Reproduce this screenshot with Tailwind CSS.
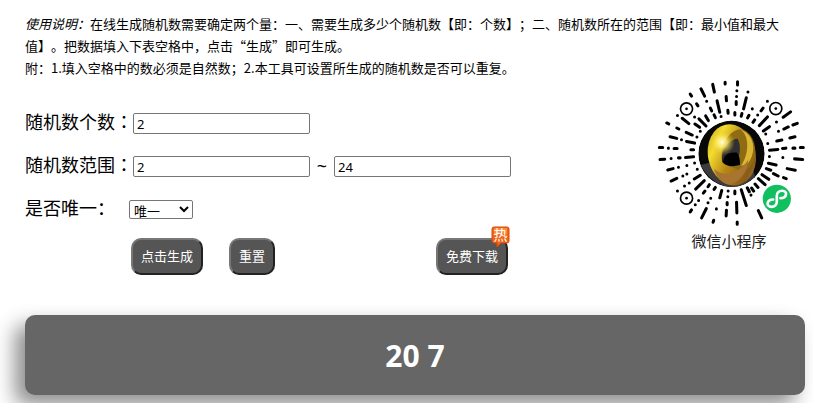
<!DOCTYPE html>
<html lang="zh-CN">
<head>
  <meta charset="UTF-8" />
  <meta name="viewport" content="width=device-width, initial-scale=1.0"/>
  <title>在线随机数生成器</title>
  <script src="https://cdn.jsdelivr.net/npm/@tailwindcss/browser@4"></script>
  <style>
    body {
      font-family: 'Noto Sans', 'Noto Sans CJK SC', sans-serif;
      text-spacing-trim: space-all;
    }
  </style>
</head>
<body class="bg-white text-black">

  <main class="pt-[13px] pl-[25px] pr-2 pb-2">
    <!-- Instructions -->
    <section class="pr-5 text-[13px] leading-[22px] font-['Noto_Sans_CJK_SC',sans-serif]">
      <p><em>使用说明：</em>在线生成随机数需要确定两个量：一、需要生成多少个随机数【即：个数】；二、随机数所在的范围【即：最小值和最大值】。把数据填入下表空格中，点击“生成”即可生成。</p>
      <p>附：1.填入空格中的数必须是自然数；2.本工具可设置所生成的随机数是否可以重复。</p>
    </section>

    <div class="flex justify-between">
      <form id="random-form" class="pt-[23px] text-[18px]">
        <div class="flex items-center h-[43px]">
          <label for="count" class="w-[108px] pb-[3px] leading-6 whitespace-nowrap">随机数个数<span lang="zh-TW">：</span></label>
          <input id="count" type="text" value="2" class="w-[177px] h-[21px] px-[3px] border border-[#767676] rounded-xs text-[13px]">
        </div>
        <div class="flex items-center h-[43px]">
          <label for="min" class="w-[108px] pb-[3px] leading-6 whitespace-nowrap">随机数范围<span lang="zh-TW">：</span></label>
          <input id="min" type="text" value="2" class="w-[177px] h-[21px] px-[3px] border border-[#767676] rounded-xs text-[13px]">
          <span class="w-6 text-center">~</span>
          <input id="max" type="text" value="24" aria-label="最大值" class="w-[177px] h-[21px] px-[3px] border border-[#767676] rounded-xs text-[13px]">
        </div>
        <div class="flex items-center h-[43px]">
          <label for="unique" class="w-[104px] pb-[3px] leading-6 whitespace-nowrap">是否唯一：</label>
          <select id="unique" class="w-16 h-[19px] border border-[#767676] rounded-xs bg-white text-[13px] leading-4">
            <option value="1">唯一</option>
            <option value="0">不唯一</option>
          </select>
        </div>
        <div class="flex mt-[7px] pl-[106px] text-[13px] text-white">
          <button type="button" id="generate" class="h-[37px] px-2 rounded-[10px] border-2 border-t-[#777] border-l-[#777] border-r-[#222] border-b-[#222] bg-[#555]">点击生成</button>
          <button type="reset" class="h-[37px] px-2 ml-[26px] rounded-[10px] border-2 border-t-[#777] border-l-[#777] border-r-[#222] border-b-[#222] bg-[#555]">重置</button>
          <button type="button" class="relative h-[37px] px-2 ml-[161px] rounded-[10px] border-2 border-t-[#777] border-l-[#777] border-r-[#222] border-b-[#222] bg-[#555]">
            免费下载
            <span class="absolute -top-[14px] -right-1 w-[19px] h-[22px]">
              <svg class="absolute inset-0" width="19" height="22" viewBox="0 0 19 22">
                <path d="M3 1h13a2 2 0 0 1 2 2v12a2 2 0 0 1-2 2h-6l-4 4v-4H3a2 2 0 0 1-2-2V3a2 2 0 0 1 2-2z" fill="#f06414" stroke="#d9480f"/>
                <path d="M3 2h13v6H3z" fill="#fa8c3c"/>
              </svg>
              <span class="relative block text-center text-[14px] leading-[17px]">热</span>
            </span>
          </button>
        </div>
      </form>

      <!-- Mini program code -->
      <figure class="shrink-0 w-[148px]">
        <svg width="148" height="148" viewBox="20 14 441 441" role="img" aria-label="微信小程序码">
          <defs>
            <linearGradient id="gold" x1="0" y1="0" x2="1" y2="1">
              <stop offset="0" stop-color="#b89410"/>
              <stop offset=".25" stop-color="#f4dc30"/>
              <stop offset=".5" stop-color="#b98a14"/>
              <stop offset=".8" stop-color="#8a5a18"/>
              <stop offset="1" stop-color="#c08a3c"/>
            </linearGradient>
            <radialGradient id="shine">
              <stop offset="0" stop-color="#fffde0"/>
              <stop offset=".4" stop-color="#ffef70" stop-opacity=".8"/>
              <stop offset="1" stop-color="#e0c020" stop-opacity="0"/>
            </radialGradient>
            <clipPath id="disc"><circle cx="242" cy="237" r="99"/></clipPath>
          </defs>

          <g fill="none" stroke="#000" stroke-width="9" stroke-linecap="round">
            <path transform="translate(15 9)" d="M208 15v5M211 57l1 13M216 98l1 9M171 21l5 23M136 34l11 22M104 50l4 6M184 70l8 34M164 92l4 8M123 79l4 6M153 71h0M150 115l8 14M175 112l4 8M196 117h0M117 118h0M66 114h0M80 122l20 16M130 124l21 21M34 136l6 3M64 151l6 3M92 164l18 8M118 139l14 10M134 161h0M124 178h0M44 177l20 5M78 186h0M93 191l24 5M12 209h10M39 211h0M56 212h9M106 216h8"/>
            <path transform="translate(15 234)" d="M14 20l14-1M47 17h0M69 15h5M90 14l24-2M37 51l16-4M69 43h0M94 38h0M117 30h0M125 49h0M47 84l17-8M82 69h0M94 63h0M116 78l18-11M66 114h0M87 99h0M101 90h0M120 108l26-25M119 155h0M129 142h0M143 120l5-6M157 101l4-6M157 149h0M165 135h0M175 109l4-6M104 176l4-6M138 194l14-28M172 207l2-6M182 167h0M192 134l6-22M217 114h0M216 131h0M214 148v7M212 171l-1 17"/>
            <path transform="translate(243 9)" d="M17 13v10M15 40h0M14 57h0M13 72v9M9 105v7M48 44h0M43 61l-8 33M61 94h0M30 108l-2 8M51 113l-4 8M68 127l-5 7M106 71h0M93 92l-6 8M77 112h0M106 118l-24 26M175 103l-22 16M133 133h0M112 147l-18 13M195 137l-13 5M168 148l-13 6M139 161h0M101 169h0M188 177l-15 4M149 187l-15 3M107 197h0M112 217l25-2M151 212l10-1M182 211h6M204 209h9M112 236h0M152 239h0M187 243l24 2M109 256l23 5M165 272l24 5M103 272l13 5M124 287l14 7M154 299l8 3M90 290l20 14M79 302l20 18M69 318l9 10M59 330l6 9M46 329l6 12M57 351h0M28 335l15 47M9 339v8M14 372l1 32M16 431v7M79 397l10 22"/>
          </g>
          <g fill="#fff" stroke="#000" stroke-width="5">
            <circle cx="108" cy="103" r="18"/>
            <circle cx="374" cy="102" r="18"/>
            <circle cx="108" cy="369" r="18"/>
          </g>
          <circle cx="108" cy="103" r="4"/>
          <circle cx="374" cy="102" r="4"/>
          <circle cx="108" cy="369" r="4"/>

          <!-- Gold ring logo -->
          <g clip-path="url(#disc)">
            <circle cx="242" cy="237" r="99" fill="#080808"/>
            <path d="M150 270q30 58 92 68q50-4 70-34l-20-70z" fill="#3c3c3c"/>
            <ellipse cx="243" cy="240" rx="71" ry="92" transform="rotate(-12 243 240)" fill="url(#gold)"/>
            <path d="M214 262c-8-52 20-92 52-98 38 2 56 56 42 94-10 20-22 28-34 32z" fill="#8f6c14"/>
            <path d="M266 164c30 14 30 72 4 110l22-10c26-32 18-88-26-100z" fill="#dcb832"/>
            <path d="M214 262c-4-32 14-66 46-70 12 20 8 52-6 76z" fill="#303030"/>
            <path d="M217 264c0-24 18-34 42-30q10 16 8 36l-20 4q-18 0-30-10z" fill="#000"/>
            <path d="M190 282c28 26 76 16 102-28-2 40-30 72-60 74-20-4-36-24-42-46z" fill="#a87430"/>
            <circle cx="214" cy="203" r="38" fill="url(#shine)"/>
          </g>

          <circle cx="377" cy="371" r="42" fill="#12bf5f"/>
          <path d="M366 373c-20 0-22 22-5 22 10 0 16-7 16-15v-18c0-8 6-15 16-15 17 0 15 22-5 22" fill="none" stroke="#fff" stroke-width="8" stroke-linecap="round"/>
        </svg>
        <figcaption class="pr-1 text-center text-[15px] leading-7 text-[#222]">微信小程序</figcaption>
      </figure>
    </div>

    <!-- Result -->
    <output form="random-form" for="count min max unique" class="flex items-center justify-center h-20 mt-10 rounded-[10px] bg-[#666] text-white text-[30px] font-bold shadow-[-10px_10px_20px_rgba(0,0,0,0.45)]">20 7</output>
  </main>

</body>
</html>
